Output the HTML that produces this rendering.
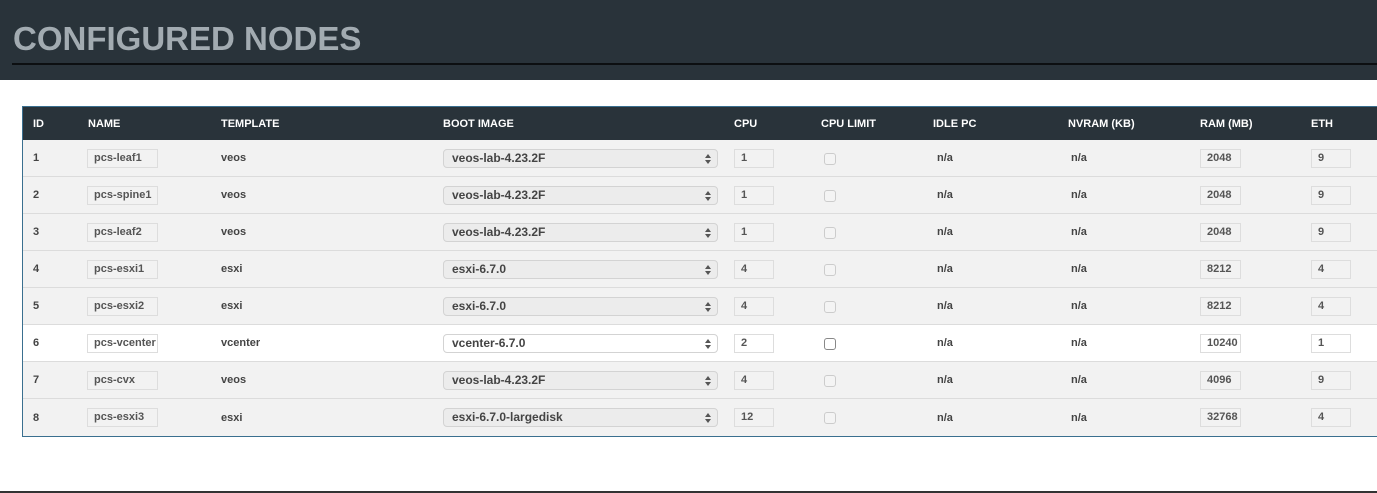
<!DOCTYPE html>
<html><head><style>
*{margin:0;padding:0;box-sizing:border-box}
body{width:1377px;height:493px;overflow:hidden;background:#fff;font-family:"Liberation Sans",sans-serif;font-weight:bold;color:#444;position:relative}
.top{position:absolute;left:0;top:0;width:1377px;height:80px;background:#29333a}
.top h1{position:absolute;left:13px;top:20px;font-size:33px;color:#a2abb1;letter-spacing:0px;font-weight:bold}
.top .ln{position:absolute;left:12px;right:0;top:63px;height:2px;background:#0c0f11}
.tbl{position:absolute;left:22px;top:106px;width:1400px;height:331px;border-left:1px solid #3a6f8f;border-top:1px solid #3a6f8f;border-bottom:2px solid #3a6f8f}
.hd{position:absolute;left:0;top:0;width:100%;height:33px;background:#29333a;color:#fff;font-size:11px}
.hd span,.r span{position:absolute;top:50%;transform:translateY(-50%)}
.r{position:absolute;left:0;width:100%;height:37px;background:#f2f2f2;border-bottom:1px solid #dcdcdc;font-size:11px;color:#444}
.r.w{background:#fff}
.in{position:absolute;top:9px;height:19px;border:1px solid #ddd;background:#f2f2f2;padding-left:6px;line-height:17px;font-size:11px;color:#555}
.w .in{background:#fff}
.sel{position:absolute;top:9px;left:420px;width:275px;height:19px;border:1px solid #d3d3d3;border-radius:4px;background:#ececec;padding-left:8px;line-height:17px;font-size:12px;color:#444}
.w .sel{background:#fff}
.sel:after{content:"";position:absolute;right:6px;top:4px;border:3px solid transparent;border-bottom:4px solid #555;border-top:0}
.sel:before{content:"";position:absolute;right:6px;top:10px;border:3px solid transparent;border-top:4px solid #555;border-bottom:0}
.cb{position:absolute;left:801px;top:13px;width:12px;height:12px;border:1px solid #ccc;border-radius:3px;background:#f4f4f4}
.w .cb{border-color:#888;background:#fff}
.bot{position:absolute;left:0;top:491px;width:1377px;height:2px;background:#333}
</style></head><body>
<div class="top"><h1>CONFIGURED NODES</h1><div class="ln"></div></div>
<div class="tbl">
<div class="hd"><span style="left:10px">ID</span><span style="left:65px">NAME</span><span style="left:198px">TEMPLATE</span><span style="left:420px">BOOT IMAGE</span><span style="left:711px">CPU</span><span style="left:798px">CPU LIMIT</span><span style="left:910px">IDLE PC</span><span style="left:1045px">NVRAM (KB)</span><span style="left:1177px">RAM (MB)</span><span style="left:1288px">ETH</span></div>

<div class="r" style="top:33px"><span style="left:10px">1</span><div class="in" style="left:64px;width:71px">pcs-leaf1</div><span style="left:198px">veos</span><div class="sel">veos-lab-4.23.2F</div><div class="in" style="left:711px;width:40px">1</div><div class="cb"></div><span style="left:914px">n/a</span><span style="left:1048px">n/a</span><div class="in" style="left:1177px;width:41px">2048</div><div class="in" style="left:1288px;width:40px">9</div></div>
<div class="r" style="top:70px"><span style="left:10px">2</span><div class="in" style="left:64px;width:71px">pcs-spine1</div><span style="left:198px">veos</span><div class="sel">veos-lab-4.23.2F</div><div class="in" style="left:711px;width:40px">1</div><div class="cb"></div><span style="left:914px">n/a</span><span style="left:1048px">n/a</span><div class="in" style="left:1177px;width:41px">2048</div><div class="in" style="left:1288px;width:40px">9</div></div>
<div class="r" style="top:107px"><span style="left:10px">3</span><div class="in" style="left:64px;width:71px">pcs-leaf2</div><span style="left:198px">veos</span><div class="sel">veos-lab-4.23.2F</div><div class="in" style="left:711px;width:40px">1</div><div class="cb"></div><span style="left:914px">n/a</span><span style="left:1048px">n/a</span><div class="in" style="left:1177px;width:41px">2048</div><div class="in" style="left:1288px;width:40px">9</div></div>
<div class="r" style="top:144px"><span style="left:10px">4</span><div class="in" style="left:64px;width:71px">pcs-esxi1</div><span style="left:198px">esxi</span><div class="sel">esxi-6.7.0</div><div class="in" style="left:711px;width:40px">4</div><div class="cb"></div><span style="left:914px">n/a</span><span style="left:1048px">n/a</span><div class="in" style="left:1177px;width:41px">8212</div><div class="in" style="left:1288px;width:40px">4</div></div>
<div class="r" style="top:181px"><span style="left:10px">5</span><div class="in" style="left:64px;width:71px">pcs-esxi2</div><span style="left:198px">esxi</span><div class="sel">esxi-6.7.0</div><div class="in" style="left:711px;width:40px">4</div><div class="cb"></div><span style="left:914px">n/a</span><span style="left:1048px">n/a</span><div class="in" style="left:1177px;width:41px">8212</div><div class="in" style="left:1288px;width:40px">4</div></div>
<div class="r w" style="top:218px"><span style="left:10px">6</span><div class="in" style="left:64px;width:71px">pcs-vcenter</div><span style="left:198px">vcenter</span><div class="sel">vcenter-6.7.0</div><div class="in" style="left:711px;width:40px">2</div><div class="cb"></div><span style="left:914px">n/a</span><span style="left:1048px">n/a</span><div class="in" style="left:1177px;width:41px">10240</div><div class="in" style="left:1288px;width:40px">1</div></div>
<div class="r" style="top:255px"><span style="left:10px">7</span><div class="in" style="left:64px;width:71px">pcs-cvx</div><span style="left:198px">veos</span><div class="sel">veos-lab-4.23.2F</div><div class="in" style="left:711px;width:40px">4</div><div class="cb"></div><span style="left:914px">n/a</span><span style="left:1048px">n/a</span><div class="in" style="left:1177px;width:41px">4096</div><div class="in" style="left:1288px;width:40px">9</div></div>
<div class="r" style="top:292px;border-bottom:0"><span style="left:10px">8</span><div class="in" style="left:64px;width:71px">pcs-esxi3</div><span style="left:198px">esxi</span><div class="sel">esxi-6.7.0-largedisk</div><div class="in" style="left:711px;width:40px">12</div><div class="cb"></div><span style="left:914px">n/a</span><span style="left:1048px">n/a</span><div class="in" style="left:1177px;width:41px">32768</div><div class="in" style="left:1288px;width:40px">4</div></div>
</div>
<div class="bot"></div>
</body></html>
